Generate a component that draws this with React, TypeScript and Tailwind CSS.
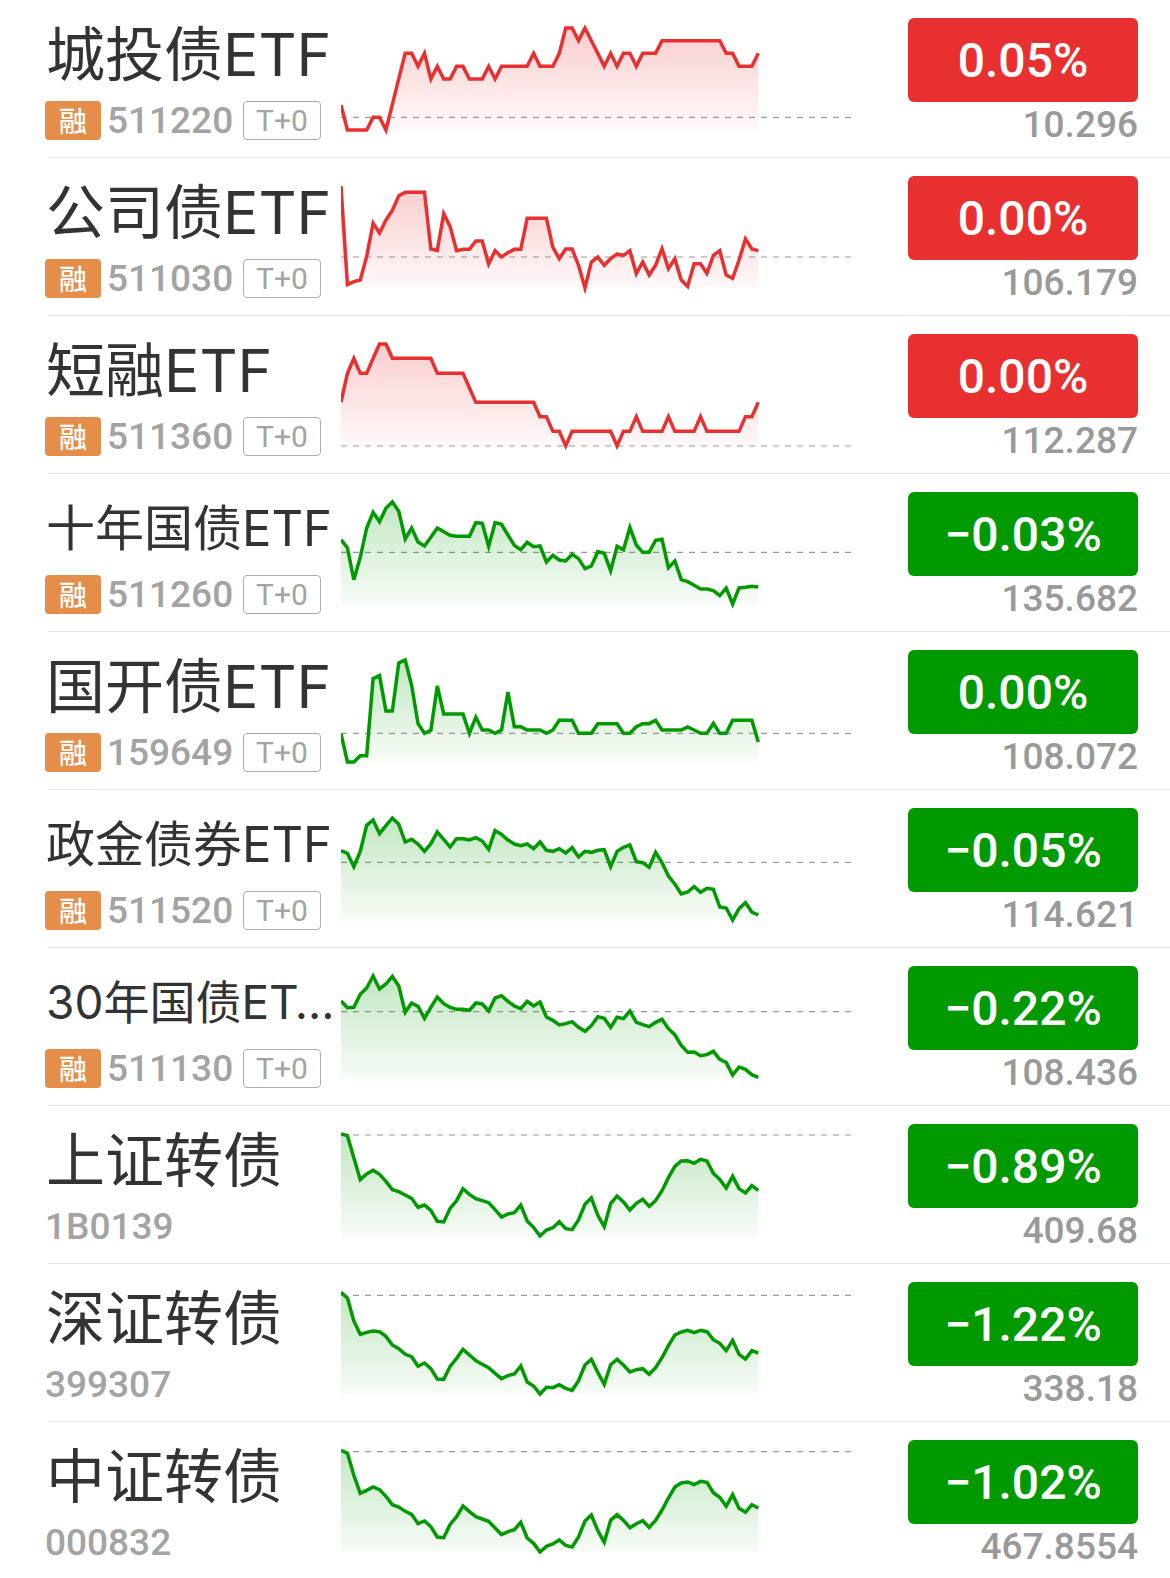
type Quote = {
  name: string;
  size: 'lg' | 'md' | 'sm';
  code: string;
  margin: boolean;
  up: boolean;
  change: string;
  price: string;
  base: number;
  points: number[];
};

const quotes: Quote[] = [
  {
    name: '城投债ETF', size: 'lg', code: '511220', margin: true, up: true, change: '0.05%', price: '10.296', base: 352,
    points: [315, 390, 390, 390, 390, 352, 352, 390, 313, 236, 160, 160, 199, 160, 237, 199, 237, 237, 199, 199, 237, 237, 237, 199, 237, 199, 199, 199, 199, 199, 160, 199, 199, 199, 160, 84, 84, 122, 84, 122, 160, 199, 160, 199, 160, 160, 199, 160, 160, 160, 122, 122, 122, 122, 122, 122, 122, 122, 122, 122, 160, 160, 199, 199, 199, 160],
  },
  {
    name: '公司债ETF', size: 'lg', code: '511030', margin: true, up: true, change: '0.00%', price: '106.179', base: 297,
    points: [84, 380, 371, 366, 295, 196, 225, 186, 157, 113, 103, 103, 103, 103, 273, 277, 167, 206, 278, 274, 274, 249, 249, 318, 278, 297, 284, 274, 274, 181, 181, 181, 181, 268, 302, 273, 273, 322, 390, 312, 297, 322, 302, 288, 292, 278, 347, 312, 351, 322, 272, 332, 302, 366, 385, 317, 317, 346, 292, 278, 351, 361, 306, 243, 273, 278],
  },
  {
    name: '短融ETF', size: 'lg', code: '511360', margin: true, up: true, change: '0.00%', price: '112.287', base: 390,
    points: [258, 172, 127, 172, 172, 127, 84, 84, 127, 127, 127, 127, 127, 127, 127, 172, 172, 172, 172, 172, 215, 259, 259, 259, 259, 259, 259, 259, 259, 259, 259, 302, 302, 346, 346, 390, 346, 346, 346, 346, 346, 346, 346, 390, 346, 346, 302, 346, 346, 346, 346, 302, 346, 346, 346, 346, 302, 346, 346, 346, 346, 346, 346, 302, 302, 259],
  },
  {
    name: '十年国债ETF', size: 'md', code: '511260', margin: true, up: false, change: '−0.03%', price: '135.682', base: 235,
    points: [197, 222, 317, 250, 162, 115, 143, 103, 84, 112, 195, 162, 204, 216, 190, 162, 173, 184, 187, 187, 187, 146, 148, 217, 146, 151, 183, 214, 227, 205, 218, 216, 264, 244, 258, 261, 241, 254, 284, 276, 233, 238, 290, 217, 227, 160, 213, 235, 235, 199, 196, 281, 261, 317, 323, 334, 345, 345, 350, 365, 342, 390, 342, 340, 337, 339],
  },
  {
    name: '国开债ETF', size: 'lg', code: '159649', margin: true, up: false, change: '0.00%', price: '108.072', base: 304,
    points: [305, 390, 390, 371, 371, 140, 131, 237, 237, 93, 84, 160, 275, 304, 295, 162, 246, 246, 246, 246, 304, 256, 294, 294, 304, 294, 180, 284, 284, 294, 294, 294, 304, 294, 265, 265, 265, 304, 304, 304, 275, 275, 275, 275, 304, 304, 284, 275, 275, 265, 294, 294, 294, 294, 285, 294, 304, 304, 274, 304, 304, 265, 265, 265, 265, 330],
  },
  {
    name: '政金债券ETF', size: 'md', code: '511520', margin: true, up: false, change: '−0.05%', price: '114.621', base: 217,
    points: [182, 190, 230, 184, 106, 90, 131, 107, 84, 103, 156, 148, 162, 184, 161, 126, 148, 171, 146, 146, 150, 143, 153, 178, 122, 133, 150, 162, 167, 162, 176, 156, 181, 184, 176, 189, 173, 201, 184, 187, 181, 179, 230, 184, 172, 165, 215, 218, 232, 187, 218, 258, 282, 312, 306, 290, 307, 295, 298, 351, 354, 390, 356, 338, 366, 375],
  },
  {
    name: '30年国债ET…', size: 'sm', code: '511130', margin: true, up: false, change: '−0.22%', price: '108.436', base: 191,
    points: [159, 179, 178, 139, 120, 84, 123, 108, 85, 114, 193, 165, 175, 211, 178, 147, 167, 178, 184, 184, 187, 165, 168, 189, 150, 143, 160, 174, 182, 160, 174, 162, 207, 217, 231, 227, 221, 238, 250, 233, 206, 211, 238, 208, 212, 189, 223, 230, 236, 223, 214, 242, 260, 292, 313, 312, 323, 320, 310, 334, 343, 381, 357, 364, 380, 388],
  },
  {
    name: '上证转债', size: 'lg', code: '1B0139', margin: false, up: false, change: '−0.89%', price: '409.68', base: 87,
    points: [84, 89, 155, 221, 204, 193, 205, 226, 251, 257, 267, 277, 304, 297, 313, 346, 348, 307, 284, 248, 265, 278, 284, 290, 311, 333, 324, 320, 297, 345, 364, 390, 372, 365, 347, 368, 371, 342, 295, 276, 328, 362, 293, 270, 288, 312, 292, 280, 301, 284, 254, 215, 181, 165, 164, 172, 160, 165, 202, 220, 246, 211, 248, 261, 239, 253],
  },
  {
    name: '深证转债', size: 'lg', code: '399307', margin: false, up: false, change: '−1.22%', price: '338.18', base: 94,
    points: [85, 102, 171, 211, 205, 201, 203, 217, 243, 254, 271, 278, 307, 297, 314, 345, 346, 307, 283, 256, 273, 290, 301, 311, 328, 344, 335, 330, 306, 354, 366, 390, 370, 371, 362, 373, 379, 350, 303, 286, 325, 361, 302, 286, 303, 324, 317, 314, 331, 311, 281, 245, 213, 204, 199, 206, 199, 203, 227, 238, 260, 229, 271, 285, 260, 267],
  },
  {
    name: '中证转债', size: 'lg', code: '000832', margin: false, up: false, change: '−1.02%', price: '467.8554', base: 89,
    points: [85, 94, 160, 214, 205, 195, 203, 223, 248, 255, 268, 277, 305, 297, 314, 345, 347, 307, 284, 252, 269, 284, 291, 298, 318, 338, 329, 323, 301, 348, 364, 390, 373, 366, 354, 370, 375, 345, 297, 279, 326, 361, 295, 278, 295, 317, 305, 296, 316, 295, 264, 228, 195, 183, 180, 188, 178, 181, 212, 226, 253, 218, 259, 271, 248, 258],
  },
];

const nameSize = { lg: 'text-[59px]', md: 'text-[49px]', sm: 'text-[46px]' };

const STEP = 19.26;
const FLOOR = 390;

function Sparkline({ quote }: { quote: Quote }) {
  const color = quote.up ? '#e93030' : '#009900';
  const id = `fade-${quote.code}`;
  const line = quote.points.map((y, i) => `${(i * STEP).toFixed(1)},${y}`).join(' ');
  const end = ((quote.points.length - 1) * STEP).toFixed(1);
  return (
    <svg viewBox="0 0 1530 432" preserveAspectRatio="none" className="h-36 w-full" aria-hidden="true">
      <defs>
        <linearGradient id={id} gradientUnits="userSpaceOnUse" x1="0" y1="84" x2="0" y2={FLOOR}>
          <stop offset="0" stopColor={color} stopOpacity="0.24" />
          <stop offset="1" stopColor={color} stopOpacity="0.03" />
        </linearGradient>
      </defs>
      <line x1="0" x2="1530" y1={quote.base} y2={quote.base} stroke="#9a9a9a" strokeWidth="3.5" strokeDasharray="18 18" />
      <polygon points={`0,${FLOOR} ${line} ${end},${FLOOR}`} fill={`url(#${id})`} />
      <polyline points={line} fill="none" stroke={color} strokeWidth="10.5" strokeLinejoin="miter" />
    </svg>
  );
}

function QuoteRow({ quote }: { quote: Quote }) {
  return (
    <li className="ml-12 grid grid-cols-[293px_1fr_230px] border-b border-[#e6e6e6] pr-8 last:border-b-0">
      <div className="pt-[18px] pb-[17px]">
        <h2
          className={`-ml-[2px] flex h-[72px] items-center whitespace-nowrap font-['Inter','Noto_Sans_CJK_SC',sans-serif] leading-none text-[#333333] ${nameSize[quote.size]}`}
        >
          {quote.name}
        </h2>
        <div className="-ml-[3px] mt-[11px] flex h-[39px] items-center text-[37px] font-medium leading-none text-[#a3a3a3]">
          {quote.margin && (
            <span className="mr-[6px] flex h-full w-14 items-center justify-center rounded bg-[#e48e49] pb-[2px] font-['Noto_Sans_CJK_SC',sans-serif] text-[28px] text-white">
              融
            </span>
          )}
          <span className="w-32">{quote.code}</span>
          {quote.margin && (
            <span className="ml-2 flex h-full w-[78px] items-center justify-center rounded border border-[#adadad] text-[30px] font-normal">
              T+0
            </span>
          )}
        </div>
      </div>
      <div className="mr-[57px]">
        <Sparkline quote={quote} />
      </div>
      <div className="pt-[18px]">
        <div
          className={`flex h-[84px] items-center justify-center rounded-md pt-[2px] text-5xl font-medium text-white ${
            quote.up ? 'bg-[#e93030]' : 'bg-[#009900]'
          }`}
        >
          {quote.change}
        </div>
        <div className="mt-[3px] text-right text-[37px] font-medium leading-10 text-[#999999]">{quote.price}</div>
      </div>
    </li>
  );
}

export default function App() {
  return (
    <main lang="zh-Hans" className="overflow-hidden bg-white font-['Roboto','Noto_Sans_CJK_SC',sans-serif]">
      <ul>
        {quotes.map((quote) => (
          <QuoteRow key={quote.code} quote={quote} />
        ))}
      </ul>
    </main>
  );
}
